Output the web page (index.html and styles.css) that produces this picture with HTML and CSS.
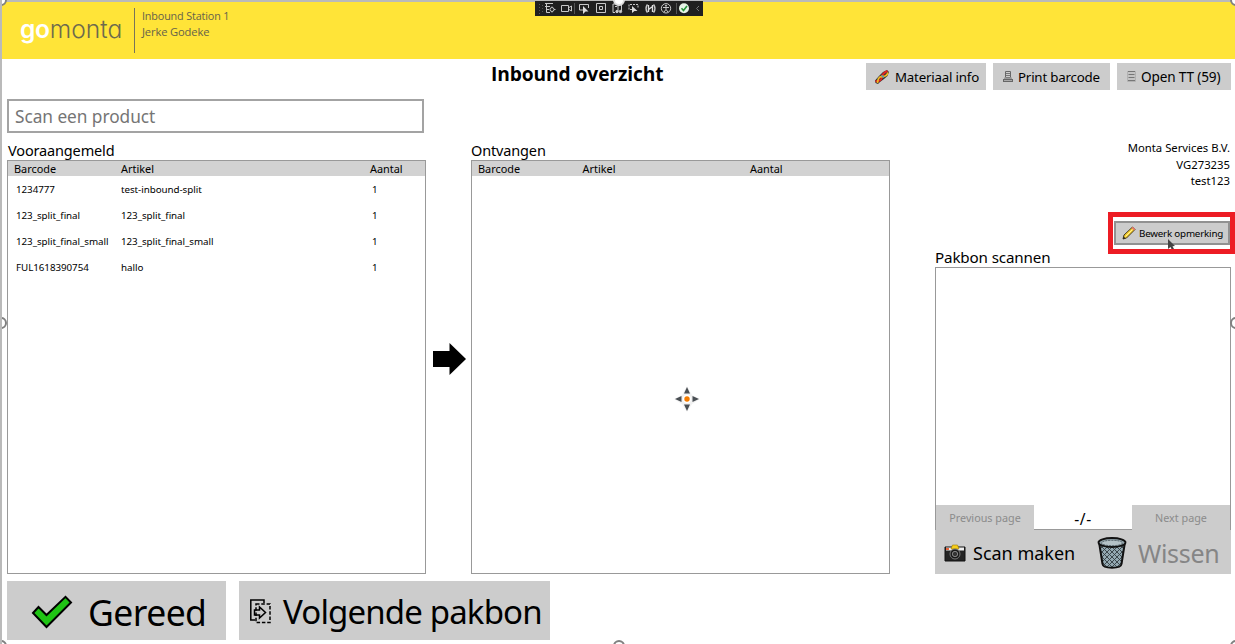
FILE: index.html
```html
<!DOCTYPE html>
<html lang="nl">
<head>
<meta charset="utf-8">
<title>Inbound overzicht</title>
<link rel="stylesheet" href="styles.css">
</head>
<body>
<div class="app">
  <header class="header">
    <div class="logo"><span class="logo-go">go</span>monta</div>
    <div class="station"><div>Inbound Station 1</div><div class="user">Jerke Godeke</div></div>
  </header>

  <div class="titlebar">
    <h1 class="title">Inbound overzicht</h1>
    <div class="tools">
      <button class="btn tool tool-material">
        <svg width="16" height="16" viewBox="0 0 16 16" fill="none"><path d="M1 11.500 5 7l4-4 4-2 2 2-1.500 4L10 10l-4 3-2 2-2.500-1z" fill="#333"/><path d="M1.500 12C4 12.500 6.500 12 7.500 9.500S7 5 13.500 2" stroke="#e02424" stroke-width="2"/><path d="M3.500 14C4 11 3.500 9.500 6 8s6 1.500 8-4.500" stroke="#f2b821" stroke-width="1.800"/><path d="m7.500 6.500 2.500 2" stroke="#4aa0c4" stroke-width="1.400"/></svg>
        <span>Materiaal info</span>
      </button>
      <button class="btn tool tool-print">
        <svg width="10" height="11" viewBox="0 0 10 11"><path d="M2.500 .5h5v6h-5z" fill="#ccc" stroke="#666"/><path d="M3 2.500h4M3 4.500h4" stroke="#777"/><path d="M1 6.500h8v1.500H1z" fill="#999"/><path d="M0 8h10v3H0z" fill="#666"/><path d="M1 9.500h8" stroke="#bbb" stroke-width=".8"/></svg>
        <span>Print barcode</span>
      </button>
      <button class="btn tool tool-open">
        <svg width="9" height="11" viewBox="0 0 9 11"><path d="M.5.5h8v10h-8z" fill="#c4c4c4" stroke="#b2b2b2"/><path d="M1 .5h7M1.500 3.500h6M1.500 6.500h6M1 9.500h7" stroke="#777"/></svg>
        <span>Open TT (59)</span>
      </button>
    </div>
  </div>

  <main class="main">
    <section class="col">
      <input class="scan" type="text" placeholder="Scan een product">
      <h2 class="label">Vooraangemeld</h2>
      <div class="table announced">
        <div class="thead"><span>Barcode</span><span>Artikel</span><span>Aantal</span></div>
        <div class="row"><span>1234777</span><span>test-inbound-split</span><span>1</span></div>
        <div class="row"><span>123_split_final</span><span>123_split_final</span><span>1</span></div>
        <div class="row"><span>123_split_final_small</span><span>123_split_final_small</span><span>1</span></div>
        <div class="row"><span>FUL1618390754</span><span>hallo</span><span>1</span></div>
      </div>
    </section>

    <div class="transfer"><svg width="33" height="33" viewBox="0 0 33 33"><path d="M0 8h16.500V0L33 16 16.500 32v-8H0z"/></svg></div>

    <section class="col received">
      <h2 class="label">Ontvangen</h2>
      <div class="table incoming">
        <div class="thead"><span>Barcode</span><span>Artikel</span><span>Aantal</span></div>
      </div>
    </section>

    <section class="col side">
      <div class="client"><div>Monta Services B.V.</div><div>VG273235</div><div>test123</div></div>
      <div class="highlight">
        <button class="edit">
          <svg width="14" height="14" viewBox="0 0 14 14"><path d="m1 13 1-4 8.500-8 2.500 2.500L4.500 12z" fill="#f7cf2c" stroke="#443a25" stroke-width="1"/><path d="m3.500 10.500 7-7" stroke="#fff09a"/><path d="m9.500 2 2.500 2.500 1.300-1.200L10.700.7z" fill="#e9776b"/><path d="m1 13 .7-2.500 1.800 1.800z" fill="#222"/></svg>
          <span>Bewerk opmerking</span>
        </button>
      </div>
      <h2 class="label">Pakbon scannen</h2>
      <div class="preview">
        <div class="pager"><button class="page">Previous page</button><span class="count">-/-</span><button class="page">Next page</button></div>
      </div>
      <div class="actions">
        <button class="action make">
          <svg width="22" height="18" viewBox="0 0 22 18"><path d="M1 3h20v14H1z" fill="#242424" stroke="#111"/><path d="M2 3.500h18v3H2z" fill="#eee"/><path d="M7 5 8.500 1h5L15 5z" fill="#f7ce1b" stroke="#9c7a00" stroke-width=".6"/><path d="M2 4h3v2H2z" fill="#e8643c"/><circle cx="11" cy="10" r="5" fill="#171717" stroke="#777"/><circle cx="11" cy="10" r="2.700" fill="#343434" stroke="#aaa" stroke-width=".7"/></svg>
          <span>Scan maken</span>
        </button>
        <button class="action wipe">
          <svg width="30" height="32" viewBox="0 0 30 32"><defs><pattern id="mesh" width="5" height="5" patternUnits="userSpaceOnUse"><path d="M0 0l5 5M5 0 0 5" stroke="#333d42" stroke-width=".9"/></pattern></defs><path d="M2 5h26l-3.500 22c-.5 5-18.500 5-19 0z" fill="#93a8b1"/><path d="M2 5h26l-3.500 22c-.5 5-18.500 5-19 0z" fill="url(#mesh)" stroke="#111" stroke-width="2"/><ellipse cx="15" cy="5.500" rx="13.500" ry="4.500" fill="#93a5ac" stroke="#111" stroke-width="1.800"/><ellipse cx="15" cy="6" rx="10.500" ry="2.700" fill="#b4c2c7" stroke="#46545a" stroke-width=".9" stroke-dasharray="2 1"/></svg>
          <span>Wissen</span>
        </button>
      </div>
    </section>
  </main>

  <footer class="footer">
    <button class="btn big done">
      <svg width="42" height="34" viewBox="0 0 42 34"><path d="M2 18 7.500 12l8 8L34.500 1.800 40 7.500 15.500 32z" fill="#1fc414" stroke="#000" stroke-width="2"/></svg>
      <span>Gereed</span>
    </button>
    <button class="btn big next">
      <svg width="21" height="25" viewBox="0 0 21 25" fill="none" stroke="#000" stroke-width="1.500"><path d="M5 21H.8V1H14v3"/><path d="M6 5h14v18.500H6z" stroke-dasharray="3.500 1.800"/><path d="M4.500 11h5V8l6 5.500-6 5.500v-3h-5z"/></svg>
      <span>Volgende pakbon</span>
    </button>
  </footer>

  <svg class="debugbar" width="168" height="15" viewBox="0 0 168 15" fill="none" stroke="#c8c8c8">
    <path d="M0 0h168v15H0z" fill="#202020" stroke="none"/>
    <path d="M4.500 3v10M7.500 4v9" stroke="#555" stroke-dasharray="1 2"/>
    <path d="M10 2.500h8M10 5.500h5M11.500 3v8.500H15M12 8.500h2"/><circle cx="17" cy="8.500" r="2"/><path d="M17 5.500v1M17 10.500v1M19 8.500h1.500"/>
    <path d="M26.500 4.500h7v6h-7zM34 6.500l2.500-1.500v5L34 8.500"/>
    <path d="M39.500 2v11" stroke="#555"/>
    <path d="M49 9h-4.500V3.500h9V7"/><path d="m48 5 5.500 5.500h-3L48 13z" fill="#ddd" stroke="none"/>
    <path d="M61.500 2.500h9v9h-9zM64.500 5.500h3v3h-3z"/>
    <path d="M83 3h-5v8.500h2M80 5.500h2M83 10V4h3.500v6"/><circle cx="82" cy="10.500" r="1.200" fill="#ccc"/><circle cx="85.500" cy="10.500" r="1.200" fill="#ccc"/>
    <path d="M97 8.500h-3v-5h9v3" stroke-dasharray="2 1"/><path d="m97 5 5.500 5h-3L97 12z" fill="#ddd" stroke="none"/>
    <path d="M112.500 3.500q-3 4 0 8M118.500 3.500q3 4 0 8" stroke-width="1.500"/><path d="M113.500 4v7M117.500 4v7M113 9l5-4" stroke="#ddd" stroke-width="1.300"/>
    <circle cx="131" cy="7.300" r="4.700"/><circle cx="131" cy="4.700" r=".6" fill="#ddd"/><path d="M128 6.500h6M131 6.500v2l-2 2.500M131 8.500l2 2.500"/>
    <path d="M141.500 2v11" stroke="#555"/>
    <circle cx="149" cy="7.300" r="5" fill="#e7f4e7" stroke="none"/><path d="m146.500 7.300 2 2.200 3.500-4.500" stroke="#27953a" stroke-width="1.600"/>
    <path d="m164 5-2.500 2.500L164 10" stroke="#777"/>
  </svg>

  <svg class="mover" width="26" height="26" viewBox="0 0 26 26"><path fill="#eee" opacity=".8" d="M13 0l5 9 8 4-8 5-5 8-5-8-8-5 8-4z"/><path fill="#4a4f54" d="m13 1 3 6.500h-6zM13 25l3-6.500h-6zM1 13l6.500-3v6zM25 13l-6.500-3v6z"/><circle cx="13" cy="13" r="4" fill="#fff"/><circle cx="13" cy="13" r="2.700" fill="#f57c00"/></svg>
  <svg class="cursor" width="9" height="10" viewBox="0 0 9 10"><path d="M1 0l7 7-2.500.3L7 10H4.500L3.500 8 1 10z" fill="#444"/></svg>

  <i class="handle t l"></i><i class="handle t c"></i><i class="handle t r"></i>
  <i class="handle m l"></i><i class="handle m r"></i>
  <i class="handle b l"></i><i class="handle b c"></i><i class="handle b r"></i>
</div>
</body>
</html>
```
FILE: styles.css
```css
* { box-sizing: border-box; }
body { margin: 0; background: #fff; }
button { font: inherit; color: inherit; border: 0; margin: 0; padding: 0; background: #ccc; white-space: nowrap; }
svg { flex: none; display: block; }

.app {
  position: relative;
  width: 1235px;
  height: 644px;
  overflow: hidden;
  border-left: 2px solid #bababa;
  font-family: "Noto Sans", "Open Sans", sans-serif;
  color: #000;
}

.header {
  display: flex;
  height: 59px;
  padding: 6px 0 0 18px;
  border-top: 2px solid #bababa;
  background: #ffe438;
}
.logo {
  width: 115px;
  height: 45px;
  border-right: 1px solid #77745a;
  font: 300 24.6px/43px Inter, sans-serif;
  font-feature-settings: "cv11";
  color: #6d6a4d;
}
.logo-go { color: #fff; font-weight: 600; letter-spacing: -.3px; }
.station {
  padding: 0 0 0 7px;
  font: 10.8px/15.5px "Open Sans", sans-serif;
  letter-spacing: -.15px;
  color: #65624b;
}
.user { font-size: 11.2px; }

.titlebar { display: flex; height: 40px; padding: 4px 4px 0 489px; justify-content: space-between; }
.title { margin: 0; font: bold 19.2px/22px "Open Sans", sans-serif; letter-spacing: -.1px; }
.tools { display: flex; gap: 7px; }
.btn { display: flex; align-items: center; }
.tool { height: 27px; padding-left: 8px; font-size: 13.3px; letter-spacing: -.2px; }
.tool-material { width: 120px; gap: 5px; }
.tool-print { width: 117px; padding-left: 10px; gap: 5px; }
.tool-open { width: 114px; padding-left: 10px; gap: 5px; font-size: 13.6px; letter-spacing: -.15px; }

.main { display: grid; grid-template-columns: 419px 45px 419px 300px; justify-content: start; height: 475px; padding-left: 5px; }
.col { display: flex; flex-direction: column; min-width: 0; }
.scan {
  width: 417px;
  height: 34px;
  padding: 0 6px;
  border: 2px solid #a3a3a3;
  outline: 0;
  font: 17.3px "Noto Sans", sans-serif;
  letter-spacing: -.05px;
}
.scan::placeholder { color: #757575; opacity: 1; }
.label { height: 27px; margin: 0; padding: 7px 0 0 1px; font-size: 14.5px; font-weight: normal; line-height: 20px; letter-spacing: -.15px; }
.received .label { padding-left: 0; }
.table { flex: 1; border: 1px solid #999; }
.thead, .row { display: grid; grid-template-columns: 107px 249px 1fr; align-items: center; }
.thead { height: 15px; padding-left: 6px; background: #d2d2d2; font-size: 10.9px; line-height: 15px; }
.row { height: 26px; padding-left: 8px; grid-template-columns: 105px 251px 1fr; font-size: 9.8px; letter-spacing: -.05px; }
.incoming .thead { grid-template-columns: 104.5px 167.5px 1fr; }
.transfer { padding: 244px 0 0 7px; }
.received { padding-top: 34px; }

.side { width: 300px; margin-left: 45px; }
.client { height: 113px; padding: 41px 5px 0 0; text-align: right; font-size: 11.3px; line-height: 16.6px; }
.highlight { width: 127px; height: 42px; margin-left: 173px; padding: 4px 0 0 1px; border: 5px solid #ed1c24; }
.edit {
  display: flex;
  align-items: center;
  gap: 3px;
  width: 116px;
  height: 24px;
  padding-left: 6px;
  border: 2px solid #919191;
  font-size: 9.8px;
  letter-spacing: -.2px;
}
.side .label { height: 14px; padding: 0; margin-top: -1px; font-size: 15.2px; line-height: 8px; }
.preview { display: flex; align-items: flex-end; width: 296px; height: 263px; border: 1px solid #999; }
.pager { display: grid; grid-template-columns: 98px 1fr 98px; width: 100%; height: 24px; }
.page { color: #8b8b8b; font-size: 10.8px; }
.count { padding-top: 3px; text-align: center; font-size: 15.5px; letter-spacing: .6px; }
.actions { display: grid; grid-template-columns: 155px 1fr; width: 296px; height: 44px; background: #ccc; }
.action { display: flex; align-items: center; padding-top: 2px; }
.make { padding-left: 9px; gap: 7px; font-size: 18px; }
.wipe { padding-left: 7px; gap: 11px; font-size: 25px; letter-spacing: -.3px; color: #858585; }

.footer { display: flex; gap: 13px; padding: 7px 0 0 5px; }
.big { height: 59px; font-size: 35.5px; letter-spacing: -.55px; }
.done { width: 219px; padding: 2px 0 0 24px; gap: 15px; }
.next { width: 311px; padding: 2px 0 0 11px; gap: 12px; font-size: 33px; letter-spacing: -.85px; }

.debugbar { position: absolute; left: 533px; top: 1px; }
.mover { position: absolute; left: 672px; top: 386px; }
.cursor { position: absolute; left: 1165px; top: 239px; }

.handle {
  position: absolute;
  width: 12px;
  height: 12px;
  border: 2px solid #808080;
  border-radius: 50%;
  background: #fff;
}
.handle.t { top: -6px; }
.handle.m { top: 317px; }
.handle.b { top: 640px; }
.handle.l { left: -7px; }
.handle.c { left: 611px; }
.handle.r { left: 1228px; }
.handle.t.c { border-color: #ddd; }
```
